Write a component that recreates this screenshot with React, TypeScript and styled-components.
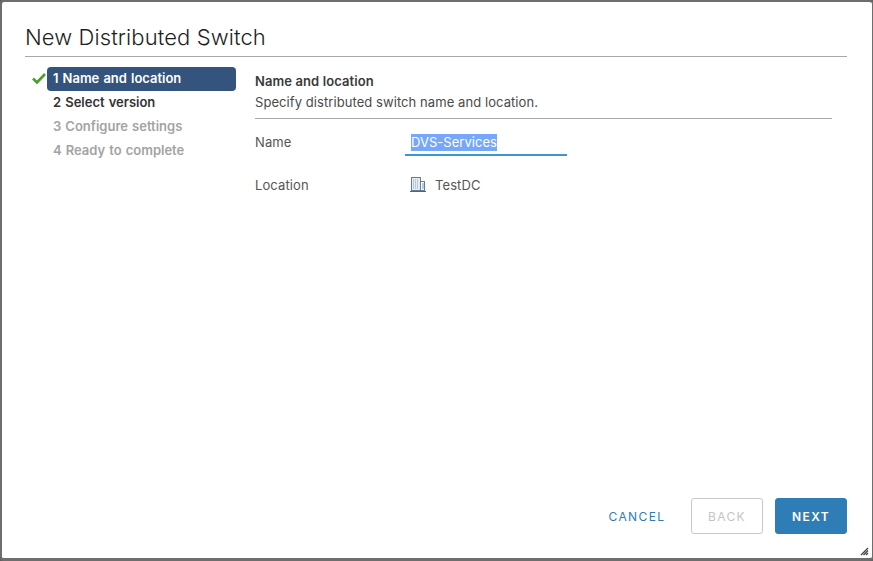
import React from "react";
import styled, { createGlobalStyle } from "styled-components";

const Global = createGlobalStyle`
  html, body { margin: 0; padding: 0; background: #5f5f5f; }
  #root { width: 873px; height: 561px; overflow: hidden; }
  * { box-sizing: border-box; }
`;

const Dialog = styled.div`
  position: relative;
  width: 873px;
  height: 561px;
  background: #fff;
  border-style: solid;
  border-color: #6e6e6e;
  border-width: 2px 1px 3px 2px;
  border-radius: 4px;
  padding: 0 25px 0 23px;
  display: flex;
  flex-direction: column;
  font-family: "Inter", "Liberation Sans", sans-serif;
  color: #565656;
`;

const Title = styled.h1`
  margin: 0;
  height: 55px;
  padding-top: 21px;
  border-bottom: 1px solid #a8a8a8;
  font-size: 22px;
  line-height: 28px;
  font-weight: 300;
  color: #1f1f1f;
  letter-spacing: 0.1px;
`;

const Body = styled.div`
  flex: 1;
  display: flex;
  padding-top: 10px;
`;

const Nav = styled.nav`
  width: 230px;
  flex: none;
  display: flex;
  flex-direction: column;
`;

const Step = styled.div<{ $state: "active" | "ready" | "disabled" }>`
  position: relative;
  width: 189px;
  height: 24px;
  margin-left: 22px;
  padding-left: 6px;
  border-radius: 4px;
  font-size: 13px;
  line-height: 23px;
  font-weight: 600;
  letter-spacing: 0;
  word-spacing: 0.8px;
  white-space: nowrap;
  background: ${(p) => (p.$state === "active" ? "#34547d" : "transparent")};
  color: ${(p) =>
    p.$state === "active" ? "#ffffff" : p.$state === "ready" ? "#333333" : "#a3a3a3"};
`;

const Check = styled.svg`
  position: absolute;
  left: -15px;
  top: 5px;
  width: 14px;
  height: 12px;
`;

const Content = styled.section`
  flex: 1;
  display: flex;
  flex-direction: column;
  padding-right: 15px;
`;

const Heading = styled.div`
  font-size: 13px;
  line-height: 18px;
  font-weight: 600;
  color: #3a3a3a;
  padding-top: 5px;
  height: 23px;
  letter-spacing: 0.1px;
`;

const Sub = styled.div`
  font-size: 13px;
  line-height: 18px;
  padding: 3px 0 6px;
  height: 29px;
  color: #4a4a4a;
  letter-spacing: 0.07px;
  border-bottom: 1px solid #a8a8a8;
`;

const Row = styled.div<{ $height: number }>`
  display: flex;
  align-items: center;
  height: ${(p) => p.$height}px;
  font-size: 13px;
  letter-spacing: 0.1px;
`;

const FieldRow = styled(Row)`
  padding-top: 11px;
`;

const Label = styled.div`
  width: 150px;
  flex: none;
  line-height: 16px;
  padding-bottom: 2px;
`;

const Field = styled.div`
  width: 162px;
  height: 25px;
  padding: 2px 0 0 6px;
  border-bottom: 2px solid #3c96d0;
  line-height: 18px;
  color: #fff;
  letter-spacing: 0.03px;
`;

const Selected = styled.span`
  background: #76a7fa;
  display: inline-block;
  line-height: 17px;
`;

const Location = styled.div`
  display: flex;
  align-items: center;
  gap: 9px;
  padding: 0 0 2px 5px;
`;

const Footer = styled.footer`
  display: flex;
  justify-content: flex-end;
  align-items: center;
  height: 36px;
  margin-bottom: 24px;
`;

const Btn = styled.button<{ $kind: "link" | "outline" | "solid" }>`
  height: 36px;
  width: ${(p) => (p.$kind === "link" ? "84px" : "72px")};
  margin-left: ${(p) => (p.$kind === "link" ? "0" : "12px")};
  border-radius: 3px;
  font-family: inherit;
  font-size: 12px;
  letter-spacing: 1.4px;
  font-weight: ${(p) => (p.$kind === "solid" ? 600 : 400)};
  padding: 0;
  border: 1px solid
    ${(p) => (p.$kind === "outline" ? "#c8c8c8" : p.$kind === "solid" ? "#2f7db6" : "transparent")};
  background: ${(p) => (p.$kind === "solid" ? "#2f7db6" : "#fff")};
  color: ${(p) =>
    p.$kind === "solid" ? "#fff" : p.$kind === "outline" ? "#c4c4c4" : "#2f7db6"};
`;

const Grip = styled.svg`
  position: absolute;
  right: 3px;
  bottom: 2px;
  width: 9px;
  height: 9px;
`;

export default function App() {
  return (
    <>
      <Global />
      <Dialog>
        <Title>New Distributed Switch</Title>
        <Body>
          <Nav>
            <Step $state="active">
              <Check viewBox="0 0 14 12">
                <path d="M1 6.5 L5 10.5 L13 2" fill="none" stroke="#4a9e2f" strokeWidth="2.6" />
              </Check>
              1 Name and location
            </Step>
            <Step $state="ready">2 Select version</Step>
            <Step $state="disabled">3 Configure settings</Step>
            <Step $state="disabled">4 Ready to complete</Step>
          </Nav>
          <Content>
            <Heading>Name and location</Heading>
            <Sub>Specify distributed switch name and location.</Sub>
            <FieldRow $height={37}>
              <Label>Name</Label>
              <Field>
                <Selected>DVS-Services</Selected>
              </Field>
            </FieldRow>
            <Row $height={59}>
              <Label>Location</Label>
              <Location>
                <svg width="16" height="15" viewBox="0 0 16 15">
                  <rect x="1.5" y="0.5" width="9" height="13" fill="#e6ebf1" stroke="#5c7f9e" />
                  <rect x="10.5" y="4.5" width="4" height="9" fill="#fff" stroke="#5c7f9e" />
                  <path d="M3 3h6M3 5h6M3 7h6M3 9h6M3 11h6" stroke="#9aa5b3" strokeDasharray="1 1" />
                  <path d="M12 7h2M12 9h2M12 11h2" stroke="#7d93a8" />
                  <path d="M0 14.5h16" stroke="#3f6a8e" />
                </svg>
                TestDC
              </Location>
            </Row>
          </Content>
        </Body>
        <Footer>
          <Btn $kind="link">CANCEL</Btn>
          <Btn $kind="outline">BACK</Btn>
          <Btn $kind="solid">NEXT</Btn>
        </Footer>
        <Grip viewBox="0 0 9 9">
          <path d="M8 1 L1 8 M8 3.5 L3.5 8 M8 6 L6 8" stroke="#444" strokeWidth="1.3" />
        </Grip>
      </Dialog>
    </>
  );
}
